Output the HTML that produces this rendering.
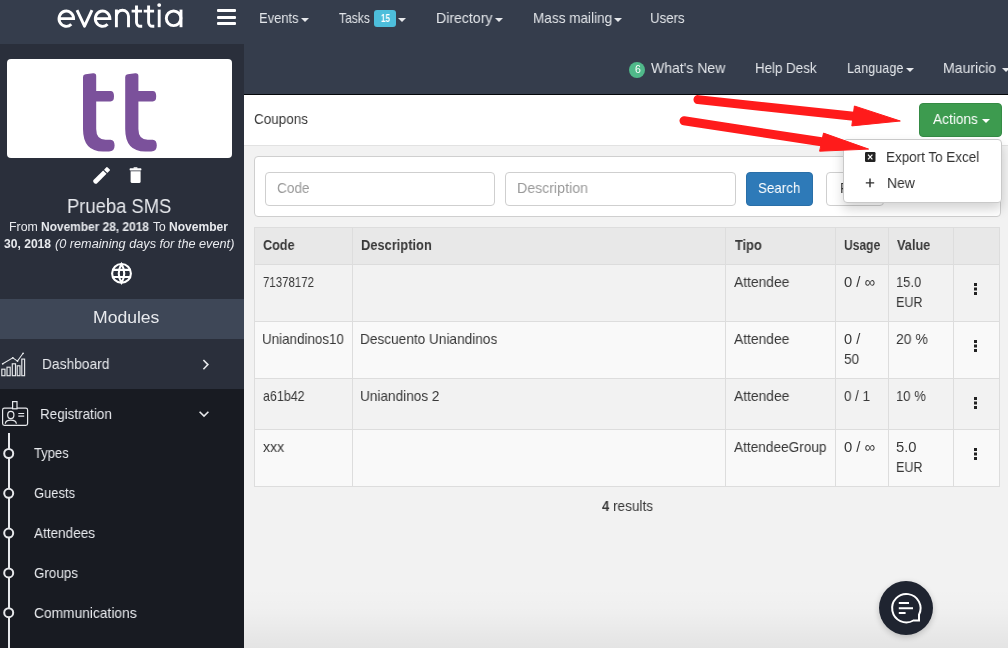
<!DOCTYPE html>
<html><head><meta charset="utf-8">
<style>
*{box-sizing:border-box;margin:0;padding:0}
html,body{width:1008px;height:648px;overflow:hidden;font-family:"Liberation Sans",sans-serif;background:#f2f2f2;position:relative}
.a{position:absolute}
.t{position:absolute;white-space:nowrap;line-height:1;transform-origin:0 0;will-change:transform}
.caret{position:absolute;width:0;height:0;border-left:4px solid transparent;border-right:4px solid transparent;border-top:4px solid #e6e8eb}
</style></head><body>
<!-- backgrounds -->
<div class="a" style="left:0;top:0;width:1008px;height:44px;background:#353d4c"></div>
<div class="a" style="left:0;top:44px;width:244px;height:255px;background:#2a2f3b"></div>
<div class="a" style="left:0;top:299px;width:244px;height:40px;background:#3e4757"></div>
<div class="a" style="left:0;top:339px;width:244px;height:50px;background:#2a2f3b"></div>
<div class="a" style="left:0;top:389px;width:244px;height:259px;background:#181b22"></div>
<div class="a" style="left:244px;top:44px;width:764px;height:51px;background:#353d4c;border-bottom:1px solid #05070a"></div>
<div class="a" style="left:244px;top:95px;width:764px;height:51px;background:#fff;border-bottom:1px solid #e2e2e2"></div>
<div class="a" style="left:244px;top:588px;width:764px;height:60px;background:linear-gradient(rgba(0,0,0,0),rgba(0,0,0,0.012) 40%,rgba(0,0,0,0.06))"></div>

<!-- logo -->
<svg class="a" style="left:0;top:0" width="244" height="44" viewBox="0 0 244 44">
</svg>
<svg class="a" style="left:0;top:0" width="200" height="40" viewBox="0 0 200 40">
<g fill="none" stroke="#fff" stroke-width="2.9" stroke-linecap="butt">
<path d="M59.4,18.6 H73.6 A7.3,7.7 0 1 0 71.3,24.3"/>
<path d="M77,10.2 L84.5,26.2 L92,10.2" stroke-linejoin="round"/>
<path d="M95.7,18.6 H109.9 A7.3,7.7 0 1 0 107.6,24.3"/>
<path d="M116.4,27.2 V9.6 M116.4,16.3 A6.05,6.05 0 0 1 128.5,16.3 V27.2"/>
<path d="M136.5,5.4 V22.3 A4,4 0 0 0 140.5,26.3 H142.2 M131.6,11.1 H142"/>
<path d="M148.6,5.4 V22.3 A4,4 0 0 0 152.6,26.3 H154.3 M143.7,11.1 H154.1"/>
<path d="M159.2,9.6 V27.2"/>
<circle cx="173.6" cy="18.3" r="7.3"/>
<path d="M181,9.6 V27.2"/>
</g>
<circle cx="159.2" cy="5.1" r="1.95" fill="#fff"/>
</svg>
<div class="a" style="left:217px;top:9px;width:19px;height:3px;background:#fff;border-radius:1px"></div>
<div class="a" style="left:217px;top:15.5px;width:19px;height:3px;background:#fff;border-radius:1px"></div>
<div class="a" style="left:217px;top:22px;width:19px;height:3px;background:#fff;border-radius:1px"></div>

<!-- carets -->
<div class="caret" style="left:301px;top:18px"></div>
<div class="caret" style="left:398px;top:18px"></div>
<div class="caret" style="left:495px;top:18px"></div>
<div class="caret" style="left:613.5px;top:18px"></div>
<div class="caret" style="left:906px;top:68px"></div>
<div class="caret" style="left:1002px;top:68px"></div>
<!-- tasks badge -->
<div class="a" style="left:374px;top:10px;width:22px;height:17px;background:#4dbedb;border-radius:3px"></div>
<div class="t" style="left:381px;top:13.6px;font-size:10.4px;font-weight:bold;color:#fff;transform:scaleX(0.78)">15</div>
<!-- whats new badge -->
<div class="a" style="left:629px;top:62px;width:16px;height:16px;border-radius:50%;background:#50b98a"></div>
<div class="t" style="left:634.6px;top:64.4px;font-size:10.5px;color:#fff">6</div>

<!-- sidebar card -->
<div class="a" style="left:7px;top:59px;width:225px;height:99px;background:#fff;border-radius:4px"></div>
<svg class="a" style="left:83px;top:73px" width="80" height="80" viewBox="0 0 80 80">
<path id="tglyph" fill="#7b519b" d="M0,4 Q0,1.6 2.6,1.3 L10,0.3 Q13.2,0 13.2,3 L13.2,18 L27.5,18 Q31,18 31,23.2 Q31,28.4 27.5,28.4 L13.2,28.4 L13.2,56 Q13.2,66.6 22.5,66.7 L27.5,66.7 Q31.6,67 31.6,72.5 Q31.6,78.4 26,78.4 L20,78.5 Q0,78.5 0,56 Z"/>
<use href="#tglyph" x="42.2"/>
</svg>

<!-- pencil / trash -->
<svg class="a" style="left:88px;top:160px" width="60" height="30" viewBox="0 0 60 30">
<g transform="translate(13.6,15.4) rotate(-45)" fill="#fff">
<path d="M-10.6,-1.2 L-9.4,-2.4 L4.6,-2.4 L4.6,2.4 L-9.4,2.4 L-10.6,1.2 Z"/>
<rect x="5.7" y="-2.4" width="4.2" height="4.8" rx="0.7"/>
</g>
<g fill="#fff">
<rect x="41.6" y="8.2" width="11.8" height="2.3" rx="0.8"/>
<rect x="45.5" y="7.3" width="4" height="1.5" rx="0.5"/>
<path d="M42.6,11.2 H52.6 V21.5 Q52.6,23 51.1,23 H44.1 Q42.6,23 42.6,21.5 Z"/>
</g>
</svg>

<!-- globe -->
<svg class="a" style="left:110px;top:262px" width="24" height="24" viewBox="0 0 24 24">
<g fill="none" stroke="#fff" stroke-width="2.1">
<circle cx="11.5" cy="11.4" r="9.4"/>
<path d="M11.5,2 Q6,11.4 11.5,20.8 Q17,11.4 11.5,2 Z"/>
<path d="M2.5,7.9 H20.5 M2.5,15 H20.5"/>
</g>
</svg>

<!-- dashboard icon -->
<svg class="a" style="left:0;top:352px" width="28" height="26" viewBox="0 0 28 26">
<g fill="none" stroke="#e6e8eb" stroke-width="1.15">
<path d="M2.7,11.8 L12.8,5.8 L17.5,9.1 L23.1,1.3" stroke-width="1.1"/>
<rect x="1.8" y="17.2" width="3.2" height="6.5"/>
<rect x="7" y="15.2" width="3.2" height="8.5"/>
<rect x="12.3" y="11.8" width="3.2" height="11.9"/>
<rect x="17.2" y="13.8" width="2.8" height="9.9"/>
<rect x="21.8" y="7.1" width="2.8" height="16.6"/>
</g>
<g fill="#e6e8eb"><circle cx="2.7" cy="11.8" r="0.9"/><circle cx="12.8" cy="5.8" r="0.9"/><circle cx="17.5" cy="9.1" r="0.9"/><circle cx="23.1" cy="1.3" r="0.9"/></g>
</svg>
<!-- chevrons -->
<svg class="a" style="left:200px;top:357px" width="12" height="16" viewBox="0 0 12 16">
<path d="M3.4,3 L7.9,7.6 L3.4,12.2" fill="none" stroke="#e6e8eb" stroke-width="1.6"/>
</svg>
<svg class="a" style="left:197px;top:407px" width="14" height="12" viewBox="0 0 14 12">
<path d="M2.6,4.7 L7,9.1 L11.4,4.7" fill="none" stroke="#e6e8eb" stroke-width="1.6"/>
</svg>
<!-- registration icon -->
<svg class="a" style="left:0;top:399px" width="30" height="30" viewBox="0 0 30 30">
<g fill="none" stroke="#e6e8eb" stroke-width="1.2">
<rect x="2.6" y="9.1" width="25" height="17.3" rx="1.8"/>
<rect x="12.6" y="2.6" width="4.4" height="7.2" fill="#181b22"/>
<ellipse cx="10.8" cy="16" rx="3.1" ry="3.6"/>
<path d="M5.3,24.8 Q5.6,21.2 10.8,21.2 Q16,21.2 16.4,24.8"/>
<path d="M18.3,14.5 H24.2 M18.3,17.2 H24.2"/>
</g>
</svg>
<!-- tree -->
<div class="a" style="left:7.7px;top:433px;width:2px;height:215px;background:#e6e8eb"></div>
<svg class="a" style="left:0;top:440px" width="20" height="200" viewBox="0 0 20 200">
<g fill="#181b22" stroke="#e6e8eb" stroke-width="2">
<circle cx="8.7" cy="13.5" r="4.5"/>
<circle cx="8.7" cy="53.3" r="4.5"/>
<circle cx="8.7" cy="93.1" r="4.5"/>
<circle cx="8.7" cy="132.9" r="4.5"/>
<circle cx="8.7" cy="172.7" r="4.5"/>
</g>
</svg>

<!-- actions button -->
<div class="a" style="left:919px;top:103px;width:83px;height:34px;background:#3d9b4f;border:1px solid #358b45;border-radius:4px"></div>
<div class="caret" style="left:981.5px;top:119px;border-top-color:#fff"></div>

<!-- filter panel -->
<div class="a" style="left:254px;top:156px;width:747px;height:61px;background:#fff;border:1px solid #cfcfcf;border-radius:4px"></div>
<div class="a" style="left:265px;top:172px;width:230px;height:34px;background:#fff;border:1px solid #cfcfcf;border-radius:4px"></div>
<div class="a" style="left:505px;top:172px;width:231px;height:34px;background:#fff;border:1px solid #cfcfcf;border-radius:4px"></div>
<div class="a" style="left:746px;top:172px;width:67px;height:34px;background:#2e7ab8;border:1px solid #2a6fa8;border-radius:4px"></div>
<div class="a" style="left:826px;top:172px;width:58px;height:34px;background:#fff;border:1px solid #cfcfcf;border-radius:4px"></div>
<div class="t" style="left:839.5px;top:180.6px;font-size:14.5px;color:#333;transform:scaleX(0.9)">R</div>

<!-- table -->
<div class="a" style="left:254px;top:227px;width:746px;height:260px;border:1px solid #dddddd;background:#f9f9f9"></div>
<div class="a" style="left:255px;top:228px;width:744px;height:36px;background:#e8e8e8"></div>
<div class="a" style="left:255px;top:264px;width:744px;height:1px;background:#dcdcdc"></div>
<div class="a" style="left:255px;top:265px;width:744px;height:56px;background:#f2f2f2"></div>
<div class="a" style="left:255px;top:321px;width:744px;height:1px;background:#dddddd"></div>
<div class="a" style="left:255px;top:378px;width:744px;height:1px;background:#dddddd"></div>
<div class="a" style="left:255px;top:379px;width:744px;height:50px;background:#f2f2f2"></div>
<div class="a" style="left:255px;top:429px;width:744px;height:1px;background:#dddddd"></div>
<div class="a" style="left:352px;top:228px;width:1px;height:258px;background:#dddddd"></div>
<div class="a" style="left:725px;top:228px;width:1px;height:258px;background:#dddddd"></div>
<div class="a" style="left:835px;top:228px;width:1px;height:258px;background:#dddddd"></div>
<div class="a" style="left:888px;top:228px;width:1px;height:258px;background:#dddddd"></div>
<div class="a" style="left:953px;top:228px;width:1px;height:258px;background:#dddddd"></div>
<!-- kebabs -->
<svg class="a" style="left:972px;top:281px" width="8" height="16" viewBox="0 0 8 16">
<g fill="#222"><rect x="2" y="2" width="3" height="3"/><rect x="2" y="6.5" width="3" height="3"/><rect x="2" y="11" width="3" height="3"/></g></svg>
<svg class="a" style="left:972px;top:338px" width="8" height="16" viewBox="0 0 8 16">
<g fill="#222"><rect x="2" y="2" width="3" height="3"/><rect x="2" y="6.5" width="3" height="3"/><rect x="2" y="11" width="3" height="3"/></g></svg>
<svg class="a" style="left:972px;top:395px" width="8" height="16" viewBox="0 0 8 16">
<g fill="#222"><rect x="2" y="2" width="3" height="3"/><rect x="2" y="6.5" width="3" height="3"/><rect x="2" y="11" width="3" height="3"/></g></svg>
<svg class="a" style="left:972px;top:446px" width="8" height="16" viewBox="0 0 8 16">
<g fill="#222"><rect x="2" y="2" width="3" height="3"/><rect x="2" y="6.5" width="3" height="3"/><rect x="2" y="11" width="3" height="3"/></g></svg>

<!-- dropdown -->
<div class="a" style="left:843px;top:139px;width:159px;height:64px;background:#fff;border:1px solid #c9c9c9;border-radius:4px;box-shadow:0 6px 12px rgba(0,0,0,0.175)"></div>
<svg class="a" style="left:864px;top:151px" width="12" height="12" viewBox="0 0 12 12">
<rect x="1" y="1" width="10.5" height="10" rx="1.2" fill="#222"/>
<path d="M4,3.6 L8.4,8.4 M8.4,3.6 L4,8.4" stroke="#fff" stroke-width="1.2"/>
</svg>
<svg class="a" style="left:864px;top:177px" width="12" height="12" viewBox="0 0 12 12">
<path d="M6,1.6 L6,10.2 M1.8,5.9 L10.2,5.9" stroke="#2e2e2e" stroke-width="1.4"/>
</svg>

<div class="t" style="left:258.82px;top:10.62px;font-size:14.5px;color:#e3e6ea;transform:scaleX(0.8930)">Events</div>
<div class="t" style="left:339.45px;top:10.62px;font-size:14.5px;color:#e3e6ea;transform:scaleX(0.8344)">Tasks</div>
<div class="t" style="left:435.63px;top:10.62px;font-size:14.5px;color:#e3e6ea;transform:scaleX(0.9727)">Directory</div>
<div class="t" style="left:532.67px;top:10.62px;font-size:14.5px;color:#e3e6ea;transform:scaleX(0.9354)">Mass mailing</div>
<div class="t" style="left:650.29px;top:10.62px;font-size:14.5px;color:#e3e6ea;transform:scaleX(0.9142)">Users</div>
<div class="t" style="left:651.20px;top:60.62px;font-size:14.5px;color:#e3e6ea;transform:scaleX(0.9659)">What's New</div>
<div class="t" style="left:755.49px;top:60.62px;font-size:14.5px;color:#e3e6ea;transform:scaleX(0.9190)">Help Desk</div>
<div class="t" style="left:847.34px;top:60.62px;font-size:14.5px;color:#e3e6ea;transform:scaleX(0.8735)">Language</div>
<div class="t" style="left:943.43px;top:60.62px;font-size:14.5px;color:#e3e6ea;transform:scaleX(0.9693)">Mauricio</div>
<div class="t" style="left:253.85px;top:111.92px;font-size:14.5px;color:#383838;transform:scaleX(0.9298)">Coupons</div>
<div class="t" style="left:932.70px;top:111.82px;font-size:14.5px;color:#ffffff;transform:scaleX(0.9427)">Actions</div>
<div class="t" style="left:277.44px;top:181.12px;font-size:14.5px;color:#9a9a9a;transform:scaleX(0.9401)">Code</div>
<div class="t" style="left:517.22px;top:181.12px;font-size:14.5px;color:#9a9a9a;transform:scaleX(0.9778)">Description</div>
<div class="t" style="left:757.75px;top:181.12px;font-size:14.5px;color:#ffffff;transform:scaleX(0.9195)">Search</div>
<div class="t" style="left:886.38px;top:150.02px;font-size:14.5px;color:#333333;transform:scaleX(0.9269)">Export To Excel</div>
<div class="t" style="left:886.84px;top:175.62px;font-size:14.5px;color:#333333;transform:scaleX(0.9595)">New</div>
<div class="t" style="left:262.96px;top:238.02px;font-size:14.5px;color:#383838;transform:scaleX(0.8700);font-weight:bold">Code</div>
<div class="t" style="left:360.60px;top:238.02px;font-size:14.5px;color:#383838;transform:scaleX(0.8871);font-weight:bold">Description</div>
<div class="t" style="left:734.51px;top:238.02px;font-size:14.5px;color:#383838;transform:scaleX(0.8827);font-weight:bold">Tipo</div>
<div class="t" style="left:843.63px;top:238.02px;font-size:14.5px;color:#383838;transform:scaleX(0.8330);font-weight:bold">Usage</div>
<div class="t" style="left:896.80px;top:238.02px;font-size:14.5px;color:#383838;transform:scaleX(0.8792);font-weight:bold">Value</div>
<div class="t" style="left:262.85px;top:275.02px;font-size:14.5px;color:#383838;transform:scaleX(0.7886)">71378172</div>
<div class="t" style="left:734.10px;top:275.02px;font-size:14.5px;color:#383838;transform:scaleX(0.9533)">Attendee</div>
<div class="t" style="left:843.79px;top:275.02px;font-size:14.5px;color:#383838;transform:scaleX(1.0221)">0 / ∞</div>
<div class="t" style="left:895.82px;top:275.02px;font-size:14.5px;color:#383838;transform:scaleX(0.8924)">15.0</div>
<div class="t" style="left:895.85px;top:295.02px;font-size:14.5px;color:#383838;transform:scaleX(0.8633)">EUR</div>
<div class="t" style="left:262.28px;top:332.02px;font-size:14.5px;color:#383838;transform:scaleX(0.9240)">Uniandinos10</div>
<div class="t" style="left:360.37px;top:332.02px;font-size:14.5px;color:#383838;transform:scaleX(0.9408)">Descuento Uniandinos</div>
<div class="t" style="left:734.10px;top:332.02px;font-size:14.5px;color:#383838;transform:scaleX(0.9533)">Attendee</div>
<div class="t" style="left:843.80px;top:332.02px;font-size:14.5px;color:#383838;transform:scaleX(1.0068)">0 /</div>
<div class="t" style="left:843.83px;top:352.02px;font-size:14.5px;color:#383838;transform:scaleX(0.9426)">50</div>
<div class="t" style="left:896.13px;top:332.02px;font-size:14.5px;color:#383838;transform:scaleX(0.9605)">20 %</div>
<div class="t" style="left:262.78px;top:388.82px;font-size:14.5px;color:#383838;transform:scaleX(0.8595)">a61b42</div>
<div class="t" style="left:360.37px;top:388.82px;font-size:14.5px;color:#383838;transform:scaleX(0.9387)">Uniandinos 2</div>
<div class="t" style="left:734.10px;top:388.82px;font-size:14.5px;color:#383838;transform:scaleX(0.9533)">Attendee</div>
<div class="t" style="left:843.84px;top:388.82px;font-size:14.5px;color:#383838;transform:scaleX(0.9205)">0 / 1</div>
<div class="t" style="left:895.81px;top:388.82px;font-size:14.5px;color:#383838;transform:scaleX(0.8996)">10 %</div>
<div class="t" style="left:263.20px;top:439.62px;font-size:14.5px;color:#383838;transform:scaleX(0.9721)">xxx</div>
<div class="t" style="left:734.10px;top:439.62px;font-size:14.5px;color:#383838;transform:scaleX(0.9408)">AttendeeGroup</div>
<div class="t" style="left:843.79px;top:439.62px;font-size:14.5px;color:#383838;transform:scaleX(1.0221)">0 / ∞</div>
<div class="t" style="left:896.29px;top:439.62px;font-size:14.5px;color:#383838;transform:scaleX(1.0161)">5.0</div>
<div class="t" style="left:895.85px;top:459.62px;font-size:14.5px;color:#383838;transform:scaleX(0.8633)">EUR</div>
<div class="t" style="left:601.82px;top:498.72px;font-size:14.5px;color:#383838;transform:scaleX(0.8974);font-weight:bold">4</div>
<div class="t" style="left:612.66px;top:498.72px;font-size:14.5px;color:#383838;transform:scaleX(0.9358)">results</div>
<div class="t" style="left:66.57px;top:196.76px;font-size:19.3px;color:#e8eaee;transform:scaleX(0.9538)">Prueba SMS</div>
<div class="t" style="left:8.77px;top:220.54px;font-size:12px;color:#e8eaee;transform:scaleX(1.0303)">From</div>
<div class="t" style="left:41.01px;top:220.54px;font-size:12px;color:#e8eaee;transform:scaleX(0.9930);font-weight:bold">November 28, 2018</div>
<div class="t" style="left:153.00px;top:220.54px;font-size:12px;color:#e8eaee;transform:scaleX(1.0000)">To</div>
<div class="t" style="left:169.00px;top:220.54px;font-size:12px;color:#e8eaee;transform:scaleX(1.0049);font-weight:bold">November</div>
<div class="t" style="left:4.00px;top:238.44px;font-size:12px;color:#e8eaee;transform:scaleX(1.0078);font-weight:bold">30, 2018</div>
<div class="t" style="left:55.37px;top:238.44px;font-size:12px;color:#e8eaee;transform:scaleX(1.0587);font-style:italic">(0 remaining days for the event)</div>
<div class="t" style="left:92.57px;top:309.24px;font-size:17.2px;color:#e8eaee;transform:scaleX(1.0220)">Modules</div>
<div class="t" style="left:41.90px;top:356.00px;font-size:15px;color:#e8eaee;transform:scaleX(0.9194)">Dashboard</div>
<div class="t" style="left:39.62px;top:405.60px;font-size:15px;color:#e8eaee;transform:scaleX(0.8973)">Registration</div>
<div class="t" style="left:34.13px;top:446.32px;font-size:14.5px;color:#e8eaee;transform:scaleX(0.8963)">Types</div>
<div class="t" style="left:33.77px;top:486.32px;font-size:14.5px;color:#e8eaee;transform:scaleX(0.8931)">Guests</div>
<div class="t" style="left:34.40px;top:526.32px;font-size:14.5px;color:#e8eaee;transform:scaleX(0.9345)">Attendees</div>
<div class="t" style="left:33.75px;top:566.32px;font-size:14.5px;color:#e8eaee;transform:scaleX(0.9246)">Groups</div>
<div class="t" style="left:33.73px;top:606.32px;font-size:14.5px;color:#e8eaee;transform:scaleX(0.9501)">Communications</div>

<!-- chat bubble -->
<div class="a" style="left:879px;top:581px;width:54px;height:54px;border-radius:50%;background:#1f2430;box-shadow:0 2px 6px rgba(0,0,0,0.2)"></div>
<svg class="a" style="left:879px;top:581px" width="54" height="54" viewBox="0 0 54 54">
<g fill="none" stroke="#fff" stroke-width="2">
<path d="M40,33.6 A14.2,14.2 0 1 0 34.4,39.5 L40,39.5 Z" stroke-linejoin="miter"/>
<path d="M19.8,22 H30 M19.8,27.2 H34 M19.8,32.1 H26.6" stroke-width="2"/>
</g>
</svg>

<!-- red arrows -->
<svg class="a" style="left:0;top:0" width="1008" height="648" viewBox="0 0 1008 648">
<g fill="#ff1b1b" stroke="#ff1b1b">
<line x1="698" y1="99.6" x2="856" y2="116.5" stroke-width="9" stroke-linecap="round"/>
<polygon points="854.4,106 851.8,125.9 900.3,121" stroke-width="1" stroke-linejoin="round"/>
<line x1="684" y1="120.8" x2="823" y2="142" stroke-width="9" stroke-linecap="round"/>
<polygon points="823.5,133.1 819.6,151.2 868.6,149.1" stroke-width="1" stroke-linejoin="round"/>
</g>
</svg>
</body></html>
